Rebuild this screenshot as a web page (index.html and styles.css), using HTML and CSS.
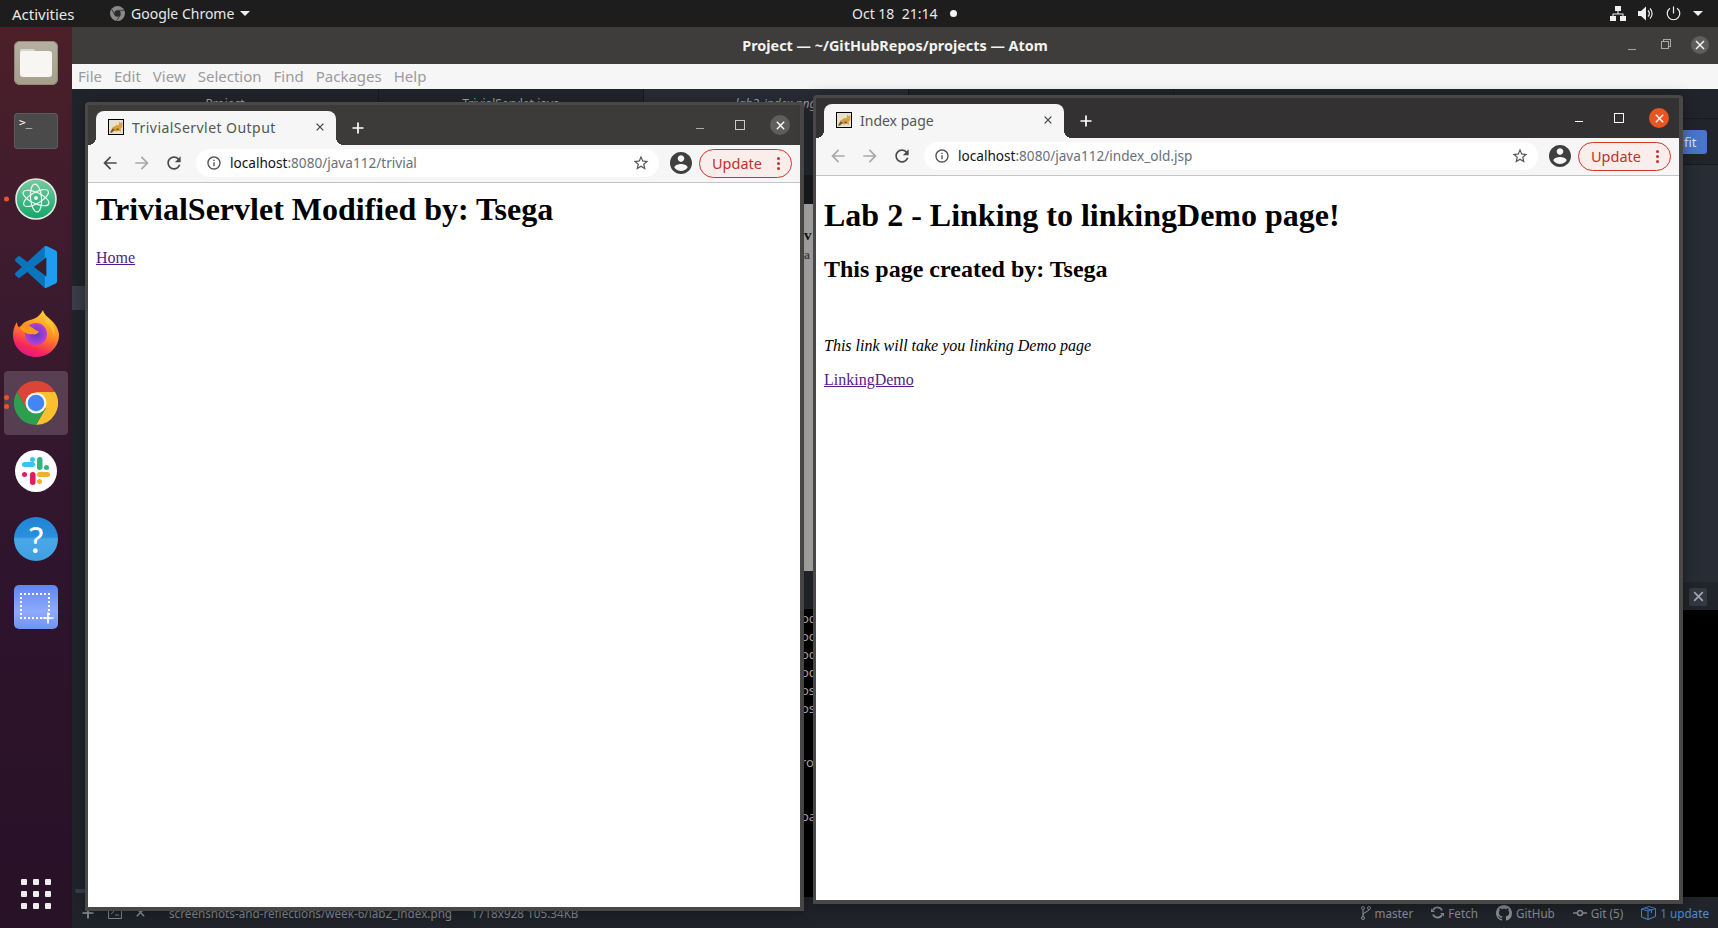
FILE: index.html
```html
<!DOCTYPE html>
<html lang="en">
    <head>
        <meta charset="utf-8">
        <title>Desktop</title>
        <link rel="stylesheet" href="styles.css">
    </head>
    <body>
        <!-- shared icons -->
        <svg class="defs" width="0" height="0">
            <symbol id="i-back" viewBox="0 0 24 24"><path d="M20 11H7.83l5.59-5.59L12 4l-8 8 8 8 1.41-1.41L7.83 13H20v-2z"/></symbol>
            <symbol id="i-forward" viewBox="0 0 24 24"><path d="M12 4l-1.41 1.41L16.17 11H4v2h12.17l-5.58 5.59L12 20l8-8z"/></symbol>
            <symbol id="i-reload" viewBox="0 0 24 24"><path d="M17.65 6.35C16.2 4.9 14.21 4 12 4c-4.42 0-7.99 3.58-7.99 8s3.57 8 7.99 8c3.73 0 6.84-2.55 7.73-6h-2.08c-.82 2.33-3.04 4-5.65 4-3.31 0-6-2.69-6-6s2.69-6 6-6c1.66 0 3.14.69 4.22 1.78L13 11h7V4l-2.35 2.35z"/></symbol>
            <symbol id="i-info" viewBox="0 0 24 24"><path d="M11 7h2v2h-2zm0 4h2v6h-2zm1-9C6.48 2 2 6.48 2 12s4.48 10 10 10 10-4.48 10-10S17.52 2 12 2zm0 18c-4.41 0-8-3.59-8-8s3.59-8 8-8 8 3.59 8 8-3.59 8-8 8z"/></symbol>
            <symbol id="i-star" viewBox="0 0 24 24"><path d="M22 9.24l-7.19-.62L12 2 9.19 8.63 2 9.24l5.46 4.73L5.82 21 12 17.27 18.18 21l-1.63-7.03L22 9.24zM12 15.4l-3.76 2.27 1-4.28-3.32-2.88 4.38-.38L12 6.1l1.71 4.04 4.38.38-3.32 2.88 1 4.28L12 15.4z"/></symbol>
            <symbol id="i-account" viewBox="2 2 20 20"><path d="M12 2C6.48 2 2 6.48 2 12s4.48 10 10 10 10-4.48 10-10S17.52 2 12 2zm0 3c1.66 0 3 1.34 3 3s-1.34 3-3 3-3-1.34-3-3 1.34-3 3-3zm0 14.2c-2.5 0-4.71-1.28-6-3.22.03-1.99 4-3.08 6-3.08 1.99 0 5.97 1.09 6 3.08-1.29 1.94-3.5 3.22-6 3.22z"/></symbol>
            <symbol id="i-x" viewBox="0 0 12 12"><path d="M2 2l8 8M10 2l-8 8" fill="none" stroke="currentColor" stroke-width="1.5"/></symbol>
            <symbol id="i-plus" viewBox="0 0 12 12"><path d="M6 0.5v11M0.5 6h11" fill="none" stroke="currentColor" stroke-width="1.7"/></symbol>
            <symbol id="i-tomcat" viewBox="0 0 16 16">
                <rect x="0.5" y="0.5" width="15" height="15" fill="#e6e2cf" stroke="#000"/>
                <path d="M2 13.500L4.500 8.500 8 6.300 10.800 6 11.200 2.500 12.700 4.200 14.300 2.800 14.300 8 12.600 10 13.200 13 10.500 11.700 8 12.800 5.800 11.800 3.800 13.500z" fill="#d9a03c"/>
                <path d="M2 13.500L4.500 9.500l2.500 1-3 3zM8.500 9.500l2.500.3-.4 1.400-2.300-.2z" fill="#6d5a34"/>
            </symbol>
        </svg>

        <!-- ubuntu top bar -->
        <div class="topbar">
            <div class="top-left">
                <span class="top-activities">Activities</span>
                <svg class="top-chrome" width="15" height="15" viewBox="0 0 16 16">
                    <circle cx="8" cy="8" r="8" fill="#8a8a8a"/>
                    <circle cx="8" cy="8" r="3.400" fill="#2b2b2b"/>
                    <path d="M8 4.600h7M5 9.800L2 3.500M10.900 9.800L7 15.800" stroke="#3a3a3a" stroke-width="1"/>
                </svg>
                <span>Google Chrome</span>
                <span class="top-caret"></span>
            </div>
            <div class="top-clock">
                <span>Oct 18&nbsp; 21:14</span>
                <span class="top-dot"></span>
            </div>
            <div class="top-right">
                <svg width="16" height="15" viewBox="0 0 16 15" fill="#f0f0f0">
                    <rect x="5" y="0" width="6" height="5"/>
                    <rect x="0" y="10" width="6" height="5"/>
                    <rect x="10" y="10" width="6" height="5"/>
                    <path d="M7.500 5h1v2.500H13.500V10h-1V8.500h-9V10h-1V7.500H7.500z"/>
                </svg>
                <svg width="16" height="15" viewBox="0 0 16 15" fill="#f0f0f0">
                    <path d="M0 5h3l5-4.500v14L3 10H0z"/>
                    <path d="M10 4.500a4 4 0 0 1 0 6M12 2.500a7 7 0 0 1 0 10" fill="none" stroke="#f0f0f0" stroke-width="1.200"/>
                </svg>
                <svg width="15" height="15" viewBox="0 0 15 15">
                    <path d="M7.500 0.500v7M4 2.200a6.300 6.300 0 1 0 7 0" fill="none" stroke="#f0f0f0" stroke-width="1.200"/>
                </svg>
                <span class="top-caret"></span>
            </div>
        </div>

        <div class="desk">
            <!-- launcher -->
            <div class="dock">
                <div class="dock-item">
                    <div class="ico-files"><div class="folder-tab"></div><div class="folder"></div></div>
                </div>
                <div class="dock-item">
                    <div class="ico-term">&gt;_</div>
                </div>
                <div class="dock-item">
                    <span class="run-dots"><i></i></span>
                    <svg width="42" height="42" viewBox="0 0 42 42">
                        <defs><linearGradient id="g-atom" x1="0" y1="0" x2="0" y2="1"><stop offset="0" stop-color="#7cc9a0"/><stop offset="1" stop-color="#0fa76a"/></linearGradient></defs>
                        <circle cx="21" cy="21" r="20" fill="url(#g-atom)" stroke="#e4ebe6" stroke-width="1.600"/>
                        <g fill="none" stroke="#eef8f2" stroke-width="1.200">
                            <ellipse cx="21" cy="20" rx="14" ry="5.500" transform="rotate(25 21 20)"/>
                            <ellipse cx="21" cy="20" rx="14" ry="5.500" transform="rotate(-30 21 20)"/>
                            <ellipse cx="21" cy="20" rx="14" ry="5.500" transform="rotate(85 21 20)"/>
                        </g>
                        <circle cx="21" cy="20" r="2" fill="#eef8f2"/>
                    </svg>
                </div>
                <div class="dock-item">
                    <svg width="42" height="42" viewBox="0 0 100 100">
                        <path d="M70.900 99.300a6.200 6.200 0 0 0 4.970-.2l20.600-9.900a6.250 6.250 0 0 0 3.540-5.630V16.400a6.250 6.250 0 0 0-3.540-5.630L75.870.87a6.200 6.200 0 0 0-7.100 1.200L29.350 38.040 12.180 25a4.170 4.170 0 0 0-5.320.24l-5.500 5a4.170 4.170 0 0 0 0 6.160L16.250 50 1.360 63.600a4.170 4.170 0 0 0 0 6.160l5.500 5a4.170 4.170 0 0 0 5.320.24l17.170-13.040 39.420 35.970a6.200 6.200 0 0 0 2.130 1.370zM75 27.300L45.100 50 75 72.700z" fill="#0a74bd" fill-rule="evenodd"/>
                        <path d="M70.900 99.300a6.200 6.200 0 0 0 4.970-.2l20.600-9.900a6.250 6.250 0 0 0 3.540-5.630V16.400a6.250 6.250 0 0 0-3.540-5.630L75.870.87a6.200 6.200 0 0 0-4.970-.2V27.300H75v45.400h-4.100z" fill="#1f9cf0"/>
                    </svg>
                </div>
                <div class="dock-item">
                    <svg class="ico-fox" width="46" height="48" viewBox="0 0 46 48">
                        <defs>
                            <linearGradient id="g-fox" x1="0.7" y1="0" x2="0.3" y2="1"><stop offset="0" stop-color="#ffd83b"/><stop offset="0.45" stop-color="#ff8a1f"/><stop offset="0.8" stop-color="#f5285e"/><stop offset="1" stop-color="#e31587"/></linearGradient>
                            <radialGradient id="g-ball"><stop offset="0" stop-color="#5b3cc4"/><stop offset="1" stop-color="#b83ed8"/></radialGradient>
                        </defs>
                        <path d="M30 1c1 5 5 7 9 11 5 5 7 10 7 14 0 12-10 22-23 22S0 38 0 26c0-4 1-9 4-13 0 3 1 5 3 6 2-5 6-7 10-8 5-1 10-4 13-10z" fill="url(#g-fox)"/>
                        <circle cx="23" cy="25" r="11" fill="url(#g-ball)"/>
                        <path d="M6 18c5-3 10-2 14 1 2 2 4 3 6 3-1 3-4 4-7 3-4 1-9-2-13-7z" fill="#ff9a1f"/>
                        <path d="M33 7c4 4 10 11 8 21-1-7-4-12-9-15z" fill="#ffc52e"/>
                    </svg>
                </div>
                <div class="dock-item dock-active">
                    <span class="run-dots"><i></i><i></i></span>
                    <svg width="44" height="44" viewBox="0 0 48 48">
                        <path d="M24 12H44.800A24 24 0 0 0 3.200 12L13.600 30z" fill="#db4437"/>
                        <path d="M24 12H44.800A24 24 0 0 1 24 48L34.400 30z" fill="#fbc02d"/>
                        <path d="M13.600 30L3.200 12A24 24 0 0 0 24 48L34.400 30z" fill="#2e9e4f"/>
                        <circle cx="24" cy="24" r="11.500" fill="#f4f4f4"/>
                        <circle cx="24" cy="24" r="9" fill="#4285f4"/>
                    </svg>
                </div>
                <div class="dock-item">
                    <svg width="42" height="42" viewBox="0 0 42 42">
                        <circle cx="21" cy="21" r="21" fill="#fff"/>
                        <g transform="translate(7 7)">
                            <rect x="0" y="5" width="13" height="5" rx="2.500" fill="#36c5f0"/>
                            <rect x="8" y="0" width="5" height="5" rx="2.500" fill="#36c5f0"/>
                            <rect x="15" y="0" width="5.500" height="13" rx="2.700" fill="#2eb67d"/>
                            <rect x="22" y="8" width="5" height="5" rx="2.500" fill="#2eb67d"/>
                            <rect x="15" y="15" width="13" height="5" rx="2.500" fill="#ecb22e"/>
                            <rect x="15" y="22" width="5" height="5" rx="2.500" fill="#ecb22e"/>
                            <rect x="8" y="15" width="5.500" height="13" rx="2.700" fill="#e01e5a"/>
                            <rect x="0" y="15" width="5" height="5" rx="2.500" fill="#e01e5a"/>
                        </g>
                    </svg>
                </div>
                <div class="dock-item">
                    <div class="ico-help">?</div>
                </div>
                <div class="dock-item">
                    <div class="ico-shot">
                        <div class="shot-dots"></div>
                        <svg class="shot-plus" width="12" height="12"><use href="#i-plus"/></svg>
                    </div>
                </div>
                <div class="dock-apps">
                    <i></i><i></i><i></i><i></i><i></i><i></i><i></i><i></i><i></i>
                </div>
            </div>

            <!-- atom behind the browsers -->
            <div class="atom">
                <div class="atom-title">
                    <span>Project — ~/GitHubRepos/projects — Atom</span>
                    <div class="atom-controls">
                        <span class="ctl-min"></span>
                        <span class="ctl-restore"></span>
                        <span class="ctl-close"><svg width="12" height="12"><use href="#i-x"/></svg></span>
                    </div>
                </div>
                <div class="atom-menu">
                    <span>File</span><span>Edit</span><span>View</span><span>Selection</span><span>Find</span><span>Packages</span><span>Help</span>
                </div>
                <div class="atom-tabs">
                    <div class="atom-tab tab-project">Project</div>
                    <div class="atom-tab">TrivialServlet.java</div>
                    <div class="atom-tab tab-italic">lab2_index.png</div>
                    <div class="atom-tab"></div>
                    <div class="atom-tab"></div>
                </div>
                <div class="atom-body">
                    <div class="pane-left">
                        <div class="thumb"></div>
                        <div class="thumb-low"></div>
                    </div>
                    <div class="pane-gap">
                        <div class="gap-dark"></div>
                        <div class="gap-image">
                            <span class="gap-v">v</span>
                            <span class="gap-ga">ga</span>
                        </div>
                        <div class="gap-band"></div>
                        <div class="gap-log">oc
oc
oc
oc
os
os


ro


oa</div>
                    </div>
                    <div class="pane-right">
                        <div class="img-bar"><span class="fit-btn">fit</span></div>
                        <div class="img-view"></div>
                        <div class="log-bar"><span class="log-close"><svg width="13" height="13"><use href="#i-x"/></svg></span></div>
                        <div class="log-black"></div>
                    </div>
                </div>
                <div class="status">
                    <svg class="st-plus" width="12" height="12"><use href="#i-plus"/></svg>
                    <svg class="st-term" width="14" height="13" viewBox="0 0 14 13"><path d="M0.500 0.500h13v12h-13zM3 3l3 2.500L3 8M7 9h4" fill="none" stroke="#8a919c"/></svg>
                    <svg class="st-x" width="11" height="11"><use href="#i-x"/></svg>
                    <span class="st-file">screenshots-and-reflections/week-6/lab2_index.png</span>
                    <span class="st-size">1718x928 105.34KB</span>
                    <div class="st-right">
                        <span class="st-item">
                            <svg width="10" height="14" viewBox="0 0 10 14"><path d="M2 3v8M8 3c0 3-6 3-6 6" fill="none" stroke="#8a919c" stroke-width="1.200"/><circle cx="2" cy="2" r="1.500" fill="none" stroke="#8a919c"/><circle cx="8" cy="2" r="1.500" fill="none" stroke="#8a919c"/><circle cx="2" cy="12" r="1.500" fill="none" stroke="#8a919c"/></svg>
                            master
                        </span>
                        <span class="st-item">
                            <svg width="13" height="13" viewBox="0 0 13 13"><path d="M11 4.500A5 5 0 0 0 2 4M2 8.500A5 5 0 0 0 11 9" fill="none" stroke="#8a919c" stroke-width="1.800"/><path d="M0 2.500l4 3.500H0zM13 10.500L9 7h4z" fill="#8a919c"/></svg>
                            Fetch
                        </span>
                        <span class="st-item">
                            <svg width="16" height="16" viewBox="0 0 16 16"><path fill="#8a919c" d="M8 0C3.580 0 0 3.580 0 8c0 3.540 2.290 6.530 5.470 7.590.4.070.55-.17.55-.38 0-.19-.01-.82-.01-1.490-2.010.37-2.530-.49-2.690-.94-.09-.23-.48-.94-.82-1.130-.28-.15-.68-.52-.01-.53.63-.01 1.080.58 1.230.82.720 1.210 1.870.87 2.330.66.070-.52.280-.87.510-1.070-1.780-.2-3.640-.89-3.640-3.950 0-.87.310-1.590.82-2.150-.08-.2-.36-1.020.08-2.120 0 0 .67-.21 2.200.82.640-.18 1.320-.27 2-.27s1.360.09 2 .27c1.530-1.040 2.200-.82 2.200-.82.440 1.100.160 1.920.080 2.120.51.560.82 1.270.82 2.150 0 3.070-1.870 3.750-3.650 3.950.29.250.54.730.54 1.480 0 1.070-.01 1.930-.01 2.200 0 .21.150.46.550.38A8.010 8.010 0 0 0 16 8c0-4.420-3.580-8-8-8z"/></svg>
                            GitHub
                        </span>
                        <span class="st-item">
                            <svg width="14" height="8" viewBox="0 0 14 8"><circle cx="7" cy="4" r="2.500" fill="none" stroke="#8a919c" stroke-width="1.500"/><path d="M0 4h4M10 4h4" stroke="#8a919c" stroke-width="1.500"/></svg>
                            Git (5)
                        </span>
                        <span class="st-item st-update">
                            <svg width="15" height="14" viewBox="0 0 15 14"><path d="M0.500 3L8 0.500 14.500 2.500v8L7 13.500 0.500 11zM0.500 3L7 5l7.500-2.500M7 5v8.500M4 2l6.500 2v3" fill="none" stroke="#4e8bd8"/></svg>
                            1 update
                        </span>
                    </div>
                </div>
            </div>
        </div>

        <!-- left browser window -->
        <div class="win win-a">
            <div class="strip">
                <div class="tab">
                    <svg width="16" height="16"><use href="#i-tomcat"/></svg>
                    <span class="tab-title">TrivialServlet Output</span>
                    <svg class="tab-x" width="10" height="10"><use href="#i-x"/></svg>
                </div>
                <svg class="new-tab" width="12" height="12"><use href="#i-plus"/></svg>
                <div class="win-controls">
                    <span class="btn-min"></span>
                    <span class="btn-max"></span>
                    <span class="btn-close"><svg width="11" height="11"><use href="#i-x"/></svg></span>
                </div>
            </div>
            <div class="toolbar">
                <svg class="tool" width="20" height="20"><use href="#i-back"/></svg>
                <svg class="tool tool-off" width="20" height="20"><use href="#i-forward"/></svg>
                <svg class="tool" width="20" height="20"><use href="#i-reload"/></svg>
                <div class="omnibox">
                    <svg width="16" height="16"><use href="#i-info"/></svg>
                    <span class="url"><b>localhost</b>:8080/java112/trivial</span>
                    <svg class="star" width="18" height="18"><use href="#i-star"/></svg>
                </div>
                <svg class="avatar" width="22" height="22"><use href="#i-account"/></svg>
                <div class="update">Update<span class="dots"><i></i><i></i><i></i></span></div>
            </div>
            <div class="page">
                <h1>TrivialServlet Modified by: Tsega</h1>
                <a href="#">Home</a>
            </div>
        </div>

        <!-- right browser window -->
        <div class="win win-b">
            <div class="strip">
                <div class="tab">
                    <svg width="16" height="16"><use href="#i-tomcat"/></svg>
                    <span class="tab-title">Index page</span>
                    <svg class="tab-x" width="10" height="10"><use href="#i-x"/></svg>
                </div>
                <svg class="new-tab" width="12" height="12"><use href="#i-plus"/></svg>
                <div class="win-controls">
                    <span class="btn-min"></span>
                    <span class="btn-max"></span>
                    <span class="btn-close"><svg width="11" height="11"><use href="#i-x"/></svg></span>
                </div>
            </div>
            <div class="toolbar">
                <svg class="tool tool-off" width="20" height="20"><use href="#i-back"/></svg>
                <svg class="tool tool-off" width="20" height="20"><use href="#i-forward"/></svg>
                <svg class="tool" width="20" height="20"><use href="#i-reload"/></svg>
                <div class="omnibox">
                    <svg width="16" height="16"><use href="#i-info"/></svg>
                    <span class="url"><b>localhost</b>:8080/java112/index_old.jsp</span>
                    <svg class="star" width="18" height="18"><use href="#i-star"/></svg>
                </div>
                <svg class="avatar" width="22" height="22"><use href="#i-account"/></svg>
                <div class="update">Update<span class="dots"><i></i><i></i><i></i></span></div>
            </div>
            <div class="page">
                <h1>Lab 2 - Linking to linkingDemo page!</h1>
                <h2>This page created by: Tsega</h2>
                <br>
                <p><em>This link will take you linking Demo page</em></p>
                <p><a href="#">LinkingDemo</a></p>
            </div>
        </div>
    </body>
</html>
```

FILE: styles.css
```css
*{
    box-sizing: border-box;
}
html,body{
    margin: 0;
    height: 100%;
    overflow: hidden;
}
body{
    display: flex;
    flex-direction: column;
    font-family: "Noto Sans", "DejaVu Sans", sans-serif;
    font-size: 14px;
    background-color: #21252b;
}
.defs{
    position: absolute;
}

/* top bar */
.topbar{
    height: 27px;
    flex: none;
    display: grid;
    grid-template-columns: 852px auto 1fr;
    align-items: center;
    background-color: #1d1d1d;
    color: #e8e8e8;
}
.top-left{
    display: flex;
    align-items: center;
    padding-left: 12px;
}
.top-activities{
    width: 98px;
    font-size: 15px;
}
.top-chrome{
    margin-right: 6px;
}
.top-caret{
    display: inline-block;
    border-left: 5px solid transparent;
    border-right: 5px solid transparent;
    border-top: 5px solid #f0f0f0;
}
.top-left .top-caret{
    margin-left: 6px;
}
.top-clock{
    display: flex;
    align-items: center;
    gap: 13px;
}
.top-dot{
    width: 7px;
    height: 7px;
    border-radius: 50%;
    background-color: #f4f4f4;
}
.top-right{
    display: flex;
    justify-content: flex-end;
    align-items: center;
    gap: 12px;
    padding-right: 15px;
}

/* launcher */
.desk{
    flex: 1;
    display: flex;
    min-height: 0;
}
.dock{
    width: 72px;
    flex: none;
    display: flex;
    flex-direction: column;
    padding-top: 2px;
    background: linear-gradient(180deg, #4c1f29 0%, #3a1a2f 32%, #2e142c 60%, #281228 100%);
}
.dock-item{
    height: 68px;
    flex: none;
    position: relative;
    display: flex;
    justify-content: center;
    align-items: center;
}
.dock-active::before{
    content: "";
    position: absolute;
    left: 4px;
    right: 4px;
    top: 2px;
    bottom: 2px;
    border-radius: 4px;
    background-color: rgba(255,255,255,.17);
}
.dock-active svg{
    position: relative;
}
.run-dots{
    position: absolute;
    left: 4px;
    top: 50%;
    transform: translateY(-50%);
    display: flex;
    flex-direction: column;
    gap: 4px;
    z-index: 1;
}
.run-dots i{
    width: 5px;
    height: 5px;
    border-radius: 50%;
    background-color: #e95420;
}
.dock-active .run-dots{
    top: 26px;
    transform: none;
}
.ico-files{
    width: 44px;
    height: 44px;
    position: relative;
    border-radius: 6px;
    background: linear-gradient(#b5b0a0, #a59f8c);
    box-shadow: inset 0 0 0 1px #8f8a78;
}
.folder{
    position: absolute;
    left: 6px;
    right: 6px;
    top: 10px;
    height: 26px;
    border-radius: 3px;
    background-color: #f8f6f3;
}
.folder-tab{
    position: absolute;
    left: 6px;
    top: 8px;
    width: 15px;
    height: 6px;
    border-radius: 2px 2px 0 0;
    background-color: #d9d6cf;
}
.ico-term{
    width: 44px;
    height: 36px;
    padding: 0 0 0 5px;
    border-radius: 4px;
    background-color: #4a4a4a;
    box-shadow: inset 0 0 0 1px #5b5b5b;
    color: #fff;
    font-family: "DejaVu Sans Mono", monospace;
    font-size: 11px;
    line-height: 19px;
}
.ico-fox{
    margin-bottom: 4px;
}
.ico-help{
    width: 44px;
    height: 44px;
    border-radius: 50%;
    background: linear-gradient(#1f84d6 0%, #2a8fdc 45%, #4aa8e8 50%, #3f9fe2 100%);
    color: #fff;
    font-family: "Lato", sans-serif;
    font-size: 36px;
    line-height: 44px;
    text-align: center;
}
.ico-shot{
    width: 44px;
    height: 44px;
    position: relative;
    border-radius: 5px;
    background: linear-gradient(#5f86ee, #8fabff 60%, #6f93f2);
}
.shot-dots{
    position: absolute;
    left: 6px;
    top: 8px;
    width: 30px;
    height: 26px;
    border: 2px dotted #fff;
}
.shot-plus{
    position: absolute;
    right: 4px;
    bottom: 5px;
    color: #fff;
}
.dock-apps{
    margin: auto 0 19px;
    align-self: center;
    display: grid;
    grid-template-columns: repeat(3, 6px);
    gap: 6px;
}
.dock-apps i{
    height: 6px;
    border-radius: 1px;
    background-color: #eeeeee;
}

/* atom */
.atom{
    flex: 1;
    min-width: 0;
    display: flex;
    flex-direction: column;
}
.atom-title{
    height: 37px;
    flex: none;
    position: relative;
    background-color: #3f3d3b;
    color: #f2f2f2;
    font-weight: 700;
    font-size: 14.400px;
    line-height: 37px;
    text-align: center;
}
.atom-controls{
    position: absolute;
    right: 1px;
    top: 0;
    height: 36px;
    display: flex;
    align-items: center;
}
.atom-controls span{
    width: 34px;
    display: flex;
    justify-content: center;
    align-items: center;
}
.ctl-min::before{
    content: "";
    width: 8px;
    height: 1px;
    margin-top: 8px;
    background-color: #a8a8a8;
}
.ctl-restore::before{
    content: "";
    width: 6px;
    height: 6px;
    margin-right: 2px;
    border: 1px solid #a8a8a8;
    box-shadow: 2px -2px 0 -1px #3f3d3b, 2px -2px 0 0 #a8a8a8;
}
.atom-controls .ctl-close{
    width: 18px;
    height: 18px;
    margin: 0 8px;
    border-radius: 50%;
    background-color: #5f5e5c;
    color: #f4f4f4;
}
.atom-menu{
    height: 25px;
    flex: none;
    display: flex;
    gap: 12px;
    padding-left: 6px;
    background-color: #f6f6f6;
    color: #9b9b9b;
    font-size: 15px;
    line-height: 25px;
}
.atom-tabs{
    height: 29px;
    flex: none;
    display: flex;
    background-color: #21252b;
    color: #9da5b4;
    font-size: 12px;
    line-height: 29px;
}
.atom-tab{
    width: 265px;
    flex: none;
    border-left: 1px solid #181a1f;
    text-align: center;
}
.tab-project{
    width: 306px;
    padding-right: 0;
    border-left: 0;
}
.tab-italic{
    font-style: italic;
    background-color: #282c34;
}
.atom-body{
    flex: 1;
    min-height: 0;
    display: flex;
}
.pane-left{
    width: 732px;
    flex: none;
    position: relative;
    background-color: #21252b;
}
.thumb{
    position: absolute;
    left: 0;
    top: 168px;
    width: 14px;
    height: 24px;
    background-color: #3a3f4b;
}
.thumb-low{
    position: absolute;
    left: 3px;
    bottom: 4px;
    width: 11px;
    height: 4px;
    border-radius: 2px;
    background-color: #3a3f4b;
}
.pane-gap{
    width: 9px;
    flex: none;
    display: flex;
    flex-direction: column;
    color: #cfcfcf;
}
.gap-dark{
    height: 86px;
    flex: none;
    background: linear-gradient(#282c34 0 57px, #1c1e22 57px);
}
.gap-image{
    height: 367px;
    flex: none;
    position: relative;
    background-color: #c8c8c8;
    color: #1a1a1a;
    font-family: "Liberation Serif", serif;
}
.gap-v{
    position: absolute;
    left: 0;
    top: 23px;
    font-weight: 700;
    font-size: 15px;
}
.gap-ga{
    position: absolute;
    left: -6px;
    top: 44px;
    font-weight: 700;
    font-size: 12px;
    color: #555;
}
.gap-band{
    height: 38px;
    flex: none;
    background-color: #282c34;
}
.gap-log{
    flex: 1;
    margin-left: -3px;
    padding-left: 0;
    background-color: #000;
    font-size: 13px;
    line-height: 18px;
    white-space: pre;
}
.pane-right{
    flex: 1;
    min-width: 0;
    display: flex;
    flex-direction: column;
    background-color: #282c34;
}
.img-bar{
    height: 47px;
    flex: none;
    display: flex;
    justify-content: flex-end;
    align-items: center;
    border-top: 1px solid #181a1f;
    border-bottom: 1px solid #181a1f;
    background-color: #21252b;
    padding-right: 11px;
}
.fit-btn{
    width: 60px;
    height: 24px;
    border-radius: 3px;
    padding-left: 37px;
    background-color: #4a76c9;
    color: #dfe8f7;
    font-size: 13px;
    line-height: 24px;
}
.img-view{
    flex: 1;
}
.log-bar{
    height: 28px;
    flex: none;
    display: flex;
    justify-content: flex-end;
    align-items: center;
    padding-right: 11px;
    border-top: 1px solid #21252b;
    background-color: #21252b;
}
.log-close{
    width: 18px;
    height: 18px;
    display: flex;
    justify-content: center;
    align-items: center;
    border-radius: 2px;
    background-color: #333842;
    color: #a4a9b4;
}
.log-black{
    height: 287px;
    flex: none;
    background-color: #000;
}
.status{
    height: 31px;
    flex: none;
    display: flex;
    align-items: center;
    padding: 0 9px 0 10px;
    background-color: #21252b;
    color: #8a919c;
    font-size: 11.700px;
}
.st-plus{
    margin-right: 14px;
    color: #9aa0aa;
}
.st-term{
    margin-right: 13px;
}
.st-x{
    margin-right: 23px;
    color: #9aa0aa;
}
.st-file{
    margin-right: 19px;
}
.st-right{
    margin-left: auto;
    display: flex;
    gap: 18px;
}
.st-item{
    display: flex;
    align-items: center;
    gap: 4px;
}
.st-update{
    color: #4e8bd8;
}

/* browser windows */
.win{
    position: absolute;
    display: flex;
    flex-direction: column;
    border: 3px solid #4a4846;
    border-right-width: 4px;
    border-bottom-width: 4px;
    border-radius: 4px 4px 0 0;
    box-shadow: 0 3px 16px rgba(0,0,0,.4);
}
.win-a{
    left: 85px;
    top: 102px;
    width: 719px;
    height: 809px;
}
.win-b{
    left: 813px;
    top: 95px;
    width: 870px;
    height: 809px;
}
.strip{
    height: 40px;
    flex: none;
    display: flex;
    align-items: flex-end;
    padding-left: 8px;
    background-color: #3d3b39;
    color: #fff;
}
.win-b .strip{
    background-color: #333131;
}
.tab{
    width: 240px;
    height: 34px;
    position: relative;
    display: flex;
    align-items: center;
    padding: 0 11px 2px 12px;
    border-radius: 8px 8px 0 0;
    background-color: #f6f6f6;
    color: #555;
}
.tab::before,
.tab::after{
    content: "";
    position: absolute;
    bottom: 0;
    width: 8px;
    height: 8px;
    background-color: #f6f6f6;
}
.tab::before{
    left: -8px;
    -webkit-mask: radial-gradient(circle at 0 0, transparent 8px, #000 8px);
}
.tab::after{
    right: -8px;
    -webkit-mask: radial-gradient(circle at 100% 0, transparent 8px, #000 8px);
}
.tab-title{
    flex: 1;
    margin-left: 8px;
}
.win-a .tab-title{
    letter-spacing: .45px;
}
.tab-x{
    color: #444;
}
.new-tab{
    margin: 0 0 11px 16px;
}
.win-controls{
    margin-left: auto;
    height: 40px;
    display: flex;
    align-items: center;
}
.win-controls span{
    width: 40px;
    display: flex;
    justify-content: center;
    align-items: center;
}
.btn-min::before{
    content: "";
    width: 8px;
    height: 1px;
    margin-top: 6px;
    background-color: #a9a9a9;
}
.btn-max::before{
    content: "";
    width: 8px;
    height: 8px;
    border: 1px solid #c9c9c9;
}
.win-controls .btn-close{
    width: 20px;
    height: 20px;
    margin: 0 10px;
    border-radius: 50%;
    background-color: #5f5e5d;
}
.win-b .btn-min::before,
.win-b .btn-max::before{
    background-color: #fff;
    border-color: #fff;
}
.win-b .btn-max::before{
    background-color: transparent;
}
.win-b .btn-close{
    background-color: #e95420;
}
.toolbar{
    height: 38px;
    flex: none;
    display: flex;
    align-items: center;
    padding: 0 8px 1px 12px;
    border-bottom: 1px solid #c4c4c4;
    background-color: #f6f6f6;
}
.tool{
    margin-right: 12px;
    fill: #4a4a4a;
}
.tool-off{
    fill: #a9a9a9;
}
.omnibox{
    flex: 1;
    height: 28px;
    display: flex;
    align-items: center;
    gap: 8px;
    padding: 0 9px 0 10px;
    border-radius: 14px;
    background-color: #fff;
    fill: #4f4f4f;
}
.url{
    flex: 1;
    padding-bottom: 2px;
    font-size: 13.600px;
    color: #687078;
}
.url b{
    font-weight: 400;
    color: #111;
}
.star{
    fill: #555;
}
.avatar{
    margin: 0 7px 0 11px;
    fill: #3f3f3f;
}
.update{
    width: 93px;
    height: 29px;
    display: flex;
    align-items: center;
    padding-left: 12px;
    border: 1px solid #d4322c;
    border-radius: 15px;
    background-color: #faeeed;
    color: #c5302a;
    font-size: 14.500px;
}
.dots{
    margin-left: auto;
    margin-right: 11px;
    display: flex;
    flex-direction: column;
    gap: 2px;
}
.dots i{
    width: 3px;
    height: 3px;
    border-radius: 50%;
    background-color: #c5302a;
}

/* page content keeps browser defaults, the body margin goes on the sides */
.page{
    flex: 1;
    min-height: 0;
    overflow: hidden;
    padding: 0 8px;
    background-color: #fff;
    color: #000;
    font-family: "Liberation Serif", serif;
    font-size: 16px;
}
.win-a h1{
    margin-top: 8px;
}
.page a{
    color: #551a8b;
}
```
